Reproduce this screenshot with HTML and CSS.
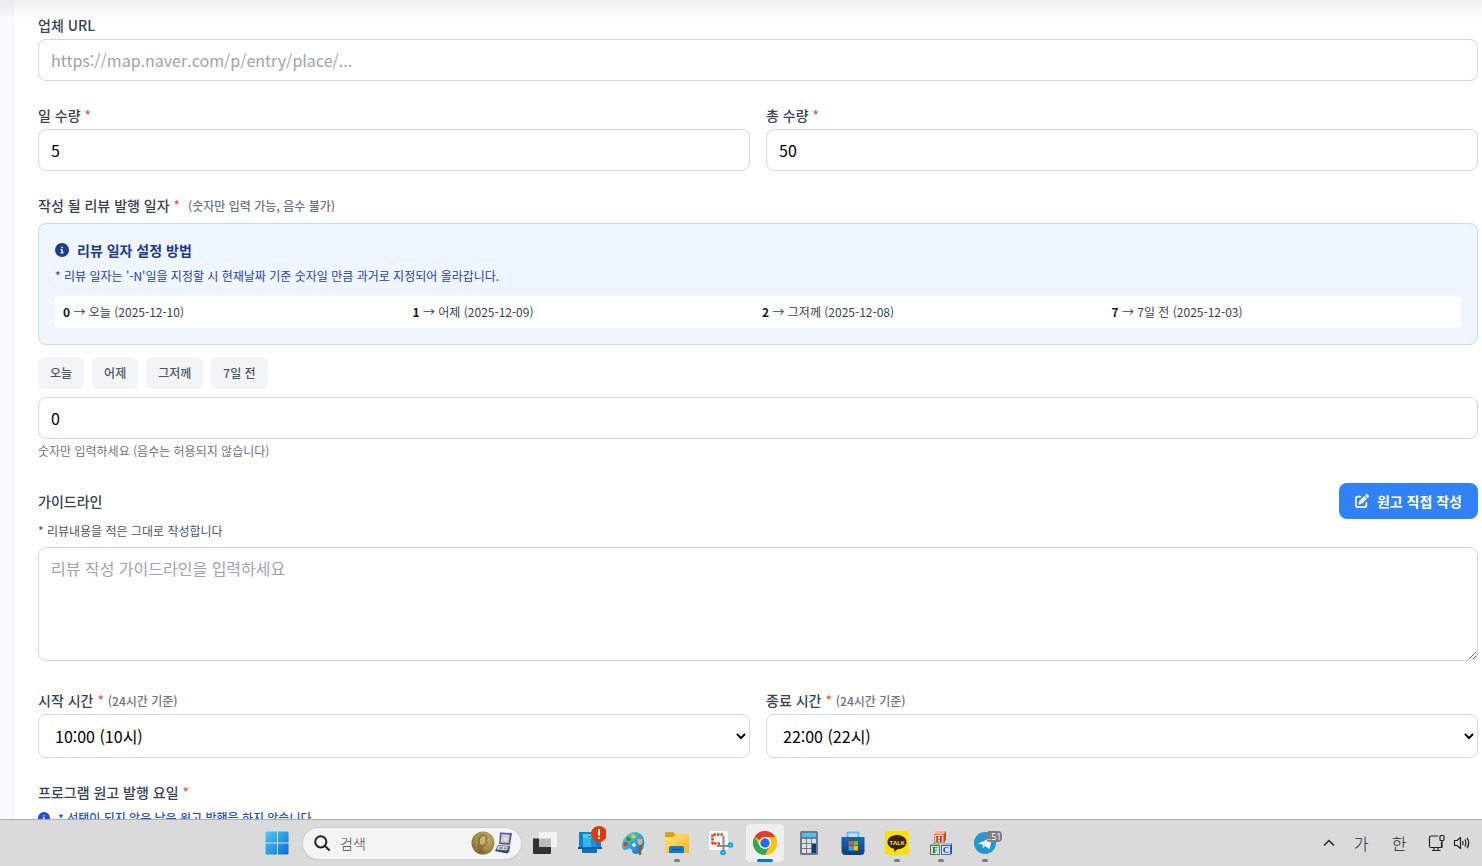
FILE: index.html
```html
<!DOCTYPE html>
<html lang="ko">
<head>
<meta charset="utf-8">
<meta name="viewport" content="width=device-width, initial-scale=1">
<title>리뷰 등록</title>
<link rel="stylesheet" href="styles.css">
</head>
<body>
<main class="page">
  <form class="panel">
    <div class="field">
      <label class="label" for="url">업체 URL</label>
      <input class="control" id="url" type="text" placeholder="https://map.naver.com/p/entry/place/...">
    </div>

    <div class="pair">
      <div class="field">
        <label class="label" for="daily">일 수량 <span class="req">*</span></label>
        <input class="control" id="daily" type="text" inputmode="numeric" value="5">
      </div>
      <div class="field">
        <label class="label" for="total">총 수량 <span class="req">*</span></label>
        <input class="control" id="total" type="text" inputmode="numeric" value="50">
      </div>
    </div>

    <div class="field">
      <label class="label label-wide" for="days">작성 될 리뷰 발행 일자 <span class="req">*</span> <span class="note note-gap">(숫자만 입력 가능, 음수 불가)</span></label>
      <section class="info">
        <h2 class="info-title">
          <svg class="info-icon" viewBox="0 0 512 512" aria-hidden="true"><circle cx="256" cy="256" r="256" fill="currentColor"/><path fill="#eff6ff" d="M216 336h24v-64h-24a24 24 0 0 1 0-48h48a24 24 0 0 1 24 24v88h8a24 24 0 0 1 0 48h-80a24 24 0 0 1 0-48zM256 128a32 32 0 1 1 0 64 32 32 0 0 1 0-64z"/></svg>
          리뷰 일자 설정 방법
        </h2>
        <p class="info-text">* 리뷰 일자는 '-N'일을 지정할 시 현재날짜 기준 숫자일 만큼 과거로 지정되어 올라갑니다.</p>
        <div class="examples">
          <div><b>0</b> → 오늘 (2025-12-10)</div>
          <div><b>1</b> → 어제 (2025-12-09)</div>
          <div><b>2</b> → 그저께 (2025-12-08)</div>
          <div><b>7</b> → 7일 전 (2025-12-03)</div>
        </div>
      </section>
      <div class="chips">
        <button class="chip" type="button">오늘</button>
        <button class="chip" type="button">어제</button>
        <button class="chip" type="button">그저께</button>
        <button class="chip" type="button">7일 전</button>
      </div>
      <input class="control" id="days" type="text" inputmode="numeric" value="0">
      <p class="hint">숫자만 입력하세요 (음수는 허용되지 않습니다)</p>
    </div>

    <div class="field">
      <div class="guide-head">
        <label class="guide-label" for="guide">가이드라인</label>
        <button class="primary" type="button">
          <svg class="primary-icon" viewBox="0 0 512 512" aria-hidden="true"><path fill="currentColor" d="M471.600 21.700c-21.900-21.900-57.300-21.900-79.200 0L362.300 51.700l97.900 97.900 30.100-30.100c21.900-21.900 21.900-57.300 0-79.200L471.600 21.700zM172.400 241.700c-6.100 6.100-10.800 13.600-13.500 21.900l-29.600 88.800c-2.900 8.600-.6 18.100 5.800 24.600s15.900 8.700 24.600 5.800l88.800-29.600c8.200-2.700 15.700-7.400 21.900-13.500L437.700 172.300 339.700 74.300 172.400 241.700zM96 64C43 64 0 107 0 160v256c0 53 43 96 96 96h256c53 0 96-43 96-96v-96c0-17.700-14.300-32-32-32s-32 14.300-32 32v96c0 17.700-14.300 32-32 32H96c-17.700 0-32-14.300-32-32V160c0-17.700 14.300-32 32-32h96c17.700 0 32-14.300 32-32s-14.300-32-32-32H96z"/></svg>
          원고 직접 작성
        </button>
      </div>
      <p class="guide-note">* 리뷰내용을 적은 그대로 작성합니다</p>
      <textarea class="control area" id="guide" rows="4" placeholder="리뷰 작성 가이드라인을 입력하세요"></textarea>
    </div>

    <div class="pair pair-times">
      <div class="field">
        <label class="label" for="start">시작 시간 <span class="req">*</span> <span class="note">(24시간 기준)</span></label>
        <select class="control select" id="start"><option>10:00 (10시)</option></select>
      </div>
      <div class="field">
        <label class="label" for="end">종료 시간 <span class="req">*</span> <span class="note">(24시간 기준)</span></label>
        <select class="control select" id="end"><option>22:00 (22시)</option></select>
      </div>
    </div>

    <div class="field">
      <p class="label label-wide">프로그램 원고 발행 요일 <span class="req">*</span></p>
      <p class="days-note">
        <svg class="days-icon" viewBox="0 0 512 512" aria-hidden="true"><circle cx="256" cy="256" r="256" fill="currentColor"/><path fill="#fff" d="M216 336h24v-64h-24a24 24 0 0 1 0-48h48a24 24 0 0 1 24 24v88h8a24 24 0 0 1 0 48h-80a24 24 0 0 1 0-48zM256 128a32 32 0 1 1 0 64 32 32 0 0 1 0-64z"/></svg>
        * 선택이 되지 않은 날은 원고 발행을 하지 않습니다.
      </p>
    </div>
  </form>
</main>

<footer class="taskbar">
  <button class="task" type="button" aria-label="시작">
    <svg width="24" height="24" viewBox="0 0 24 24"><defs><linearGradient id="win" x1="0" y1="0" x2="1" y2="1"><stop offset="0" stop-color="#4cc9fb"/><stop offset="1" stop-color="#0671cf"/></linearGradient></defs><path fill="url(#win)" d="M1.500.500H12V11.500H.500V1.500Q.500.500 1.500.500zM13 .500h9.500q1 0 1 1v10H13zM.500 12.500H12v11H1.500q-1 0-1-1zM13 12.500h10.500v10q0 1-1 1H13z"/></svg>
  </button>
  <label class="search">
    <svg width="16" height="16" viewBox="0 0 16 16" fill="none" stroke="#222" stroke-width="2" stroke-linecap="round" aria-hidden="true"><circle cx="6.800" cy="6.800" r="5.600"/><path d="M11 11l4 4"/></svg>
    <input class="search-input" type="text" placeholder="검색" aria-label="검색">
    <svg width="42" height="24" viewBox="0 0 42 24" aria-hidden="true"><defs><radialGradient id="coin" cx=".6" cy=".35" r=".75"><stop offset="0" stop-color="#c9b476"/><stop offset=".6" stop-color="#a48a45"/><stop offset="1" stop-color="#75602a"/></radialGradient></defs><circle cx="12" cy="12" r="11.500" fill="url(#coin)"/><path fill="#705b2a" opacity=".55" d="M7 22c0-5-1-6 0-9 0-2-1-3 0-5 1-4 5-6 8-4 2 1 2 4 1 6l1 2-2 1c0 3-3 3-3 5l2 4z"/><path fill="#c8b370" d="M9 8c1-3 4-4 6-2l-1 3 1 2-3 3-3-1z"/><path fill="#4c5aa0" d="M29 1.500 41 2l-2 12-11-1z"/><path fill="#d6cbc0" d="M30.500 3 39 3.500 37.500 12l-8-.5z"/><circle cx="34.500" cy="8" r="2" fill="#eee6dd"/><path fill="#33447f" d="M27 14l12 1-1 6-2 1.500L24 20z"/><path fill="#d5cfcf" d="M27.500 14.500l10 1-1.500 4-10.500-1z"/><path fill="#8a7e83" d="M29 16l3 .5-1 1.500-3-.5zM33.500 16.500l2.500.3-1 1.500-2.500-.3z"/></svg>
  </label>
  <button class="task task-after-search" type="button" aria-label="작업 보기">
    <svg width="24" height="24" viewBox="0 0 24 24"><path fill="#303030" d="M0 7.500h18V22q0 1-1 1H1q-1 0-1-1z"/><path fill="#f3f3f3" d="M6 2q0-1 1-1h16q1 0 1 1v14H6z"/><path fill="#bbb" d="M6 7.500h12V16H6z"/></svg>
  </button>
  <button class="task" type="button" aria-label="알림 앱">
    <svg width="34" height="34" viewBox="0 0 34 34"><path fill="#1380cc" d="M7 6h22v15H7z"/><path fill="#095ca8" d="M6 21h24v2H6z"/><path fill="#2fb4ee" d="M11 8h13v13H11z"/><path fill="#52cef9" d="M11 8h8v4h-8z"/><path fill="#1a91d8" d="M19 12h5v9h-5z"/><path fill="#0c71bd" d="M10 23h15v3q0 1-1 1H11q-1 0-1-1z"/><path stroke="#0879c5" d="M16 10.500h3"/><circle cx="27" cy="8" r="8" fill="#dc3b08"/><path stroke="#fff" stroke-width="2" d="M27 3v6.500M27 11v2"/></svg>
  </button>
  <button class="task" type="button" aria-label="그림판">
    <svg width="24" height="24" viewBox="0 0 24 24"><defs><linearGradient id="pal" x1="0" y1="0" x2="1" y2="1"><stop offset="0" stop-color="#56d8f5"/><stop offset="1" stop-color="#0871c4"/></linearGradient></defs><path fill="url(#pal)" d="M14 1C7 1 1 8 1 15c0 4 3 5 6 3 2-1 4 0 4 2 0 3 4 4 7 2 8-5 7-21-4-21z"/><circle cx="4.500" cy="13" r="2.200" fill="#dc3b14"/><circle cx="7.500" cy="8" r="2.300" fill="#28a51b"/><circle cx="12.500" cy="5.500" r="2.300" fill="#fbc209"/><path stroke="#fff" stroke-width="1.500" d="M13 12v4M11 14h4"/><path stroke="#995a27" stroke-width="2.600" stroke-linecap="round" d="M19 12v11"/><path fill="#deb675" d="M16.500 8h5v3L20 14h-2l-1.500-3z"/></svg>
  </button>
  <button class="task task-running" type="button" aria-label="파일 탐색기">
    <svg width="26" height="24" viewBox="0 0 26 24"><defs><linearGradient id="fold" x2="1" y2="1"><stop stop-color="#ffe08a"/><stop offset="1" stop-color="#fdb90b"/></linearGradient></defs><path fill="#dda016" d="M1 2.500Q1 1 2.500 1H9l3 3v4H1z"/><path fill="url(#fold)" d="M1 6h8l3-3h12q1 0 1 1v18H1z"/><path fill="#1579c8" d="M5 22v-5q0-2 2-2h11q2 0 2 2v5z"/><path stroke="#0758a0" d="M8 18.500h9"/></svg>
  </button>
  <button class="task" type="button" aria-label="캡처 도구">
    <svg width="26" height="26" viewBox="0 0 26 26"><rect x="1" y="1" width="19" height="19" rx="2" fill="#f5f7f8"/><path d="M15 4.500H4.500V15M12 13.500H4" fill="none" stroke="#d4441c" stroke-width="2.500" stroke-dasharray="2.500 1"/><path fill="none" stroke="#858c92" stroke-width="2" d="M15.500 6v14M9 16h12"/><g fill="#d8f0fb" stroke="#159ce0" stroke-width="2"><circle cx="22.500" cy="15" r="1.800"/><circle cx="15" cy="22.500" r="1.800"/></g></svg>
  </button>
  <button class="task task-active" type="button" aria-label="Chrome">
    <svg width="24" height="24" viewBox="0 0 24 24"><circle cx="12" cy="12" r="12" fill="#fbc116"/><path fill="#e33b2e" d="M12 12 1.600 6A12 12 0 0 1 22.400 6H12z"/><path fill="#2da94f" d="M1.600 6A12 12 0 0 0 12 24l5.200-9L12 12 6.800 15z"/><path fill="#fbc116" d="M12 24A12 12 0 0 0 22.400 6H12l5.200 9z"/><circle cx="12" cy="12" r="6" fill="#fff"/><circle cx="12" cy="12" r="4.700" fill="#286de8"/></svg>
  </button>
  <button class="task" type="button" aria-label="계산기">
    <svg width="18" height="24" viewBox="0 0 18 24"><rect width="18" height="24" rx="1.500" fill="#6e7b86"/><path fill="#43c6f5" d="M2 2h14v4H2z"/><path fill="#dce3e8" d="M2 8h4v4H2zM7 8h4v4H7zM12 8h4v4h-4zM2 13h4v4H2zM7 13h4v4H7zM2 18h4v4H2zM7 18h4v4H7z"/><path fill="#0c3d7d" d="M12 13h4v9h-4z"/></svg>
  </button>
  <button class="task" type="button" aria-label="스토어">
    <svg width="24" height="24" viewBox="0 0 24 24"><defs><linearGradient id="store" x2="0" y2="1"><stop stop-color="#126abb"/><stop offset="1" stop-color="#133e70"/></linearGradient></defs><path fill="none" stroke="#4ac8f5" stroke-width="2" d="M6.500 7V2.500q0-1 1-1h9q1 0 1 1V7"/><path fill="url(#store)" d="M.500 6h23v14q0 4-4 4h-15q-4 0-4-4z"/><path fill="#ee5125" d="M7.500 10H12v4.500H7.500z"/><path fill="#7dba18" d="M12.500 10H17v4.500h-4.500z"/><path fill="#23a5eb" d="M7.500 15H12v4.500H7.500z"/><path fill="#ffbd10" d="M12.500 15H17v4.500h-4.500z"/></svg>
  </button>
  <button class="task task-running" type="button" aria-label="카카오톡">
    <svg width="24" height="24" viewBox="0 0 24 24"><rect width="24" height="24" rx="2" fill="#fae100"/><path fill="#392020" d="M12 4c5.500 0 9.500 3 9.500 7.200 0 4-4 7-9 7L9 21l.300-3.200C5.500 17 2.500 14.500 2.500 11.200 2.500 7 6.500 4 12 4z"/><text class="talk-text" x="12" y="13.500" text-anchor="middle">TALK</text></svg>
  </button>
  <button class="task task-running" type="button" aria-label="HFC">
    <svg width="24" height="26" viewBox="0 0 24 26"><path fill="#f4b18b" d="M5 4l2-3h10l-2 3z"/><path fill="#b65124" d="M15 4l2-3v9l-2 3z"/><path fill="#e5864d" d="M5 4h10v9H5z"/><path fill="#f9dccb" d="M6 5h8v7H6z"/><path fill="#87c4a3" d="M1 15l2-2h9l-1 2z"/><path fill="#9bb9ea" d="M12 15l2-2h9l-1 2z"/><path fill="#39845d" d="M1 15h10v10H1z"/><path fill="#4069b2" d="M12 15h10v10H12z"/><path fill="#234e94" d="M22 15l1-2v10l-1 2z"/><path fill="#cde7d7" d="M2 16h8v8H2z"/><path fill="#dce7fb" d="M13 16h8v8h-8z"/><g class="block-text" text-anchor="middle"><text x="10" y="12" fill="#a71c19">H</text><text x="6" y="23" fill="#116138">F</text><text x="17" y="23" fill="#173f94">C</text></g></svg>
  </button>
  <button class="task task-running" type="button" aria-label="텔레그램">
    <svg width="36" height="28" viewBox="0 0 36 28"><circle cx="18" cy="14" r="11" fill="#2298d2"/><path fill="#fff" d="M11 14.500 24 9q1-.3.800.800L22.800 19q-.3 1-1.300.500L18 17l-2 2-.500-3.500z"/><path fill="#b9d9ed" d="M15.500 15.500 22 11l-5 5.500-1 2.500z"/><rect x="19" y="2" width="16" height="11" rx="4" fill="#7d7f82"/><text class="badge-text" x="27" y="11" text-anchor="middle">..51</text></svg>
  </button>

  <div class="tray">
    <button class="tray-item tray-more" type="button" aria-label="숨겨진 아이콘"><svg width="12" height="8" viewBox="0 0 12 8" fill="none" stroke="#222" stroke-width="1.500"><path d="M1 6.500 6 1.500l5 5"/></svg></button>
    <button class="tray-item tray-mode" type="button">가</button>
    <button class="tray-item tray-mode" type="button">한</button>
    <button class="tray-item tray-status" type="button" aria-label="네트워크 및 볼륨">
      <svg width="18" height="18" viewBox="0 0 18 18" fill="none" stroke="#222" stroke-width="1.200"><path d="M10 2H3Q1.500 2 1.500 3.500v8.500q0 1.500 1.500 1.500h10.500V8M6 13.500v3M10 13.500v3M4 16.500h8.500"/><rect x="12" y="1.500" width="4" height="5" rx="1"/><path d="M14 6.500v7"/></svg>
      <svg width="18" height="16" viewBox="0 0 18 16" fill="none" stroke="#222" stroke-width="1.200" stroke-linejoin="round"><path d="M1.500 5.500H4L7.500 2.500v11L4 10.500H1.500zM9.500 6q1.200 2 0 4M11.800 4.500q2.200 3.500 0 7M14 2.800q3.500 5.200 0 10.400"/></svg>
    </button>
  </div>
</footer>
</body>
</html>
```
FILE: styles.css
```css
* {
  box-sizing: border-box;
}

body {
  margin: 0;
  height: 100vh;
  display: flex;
  flex-direction: column;
  overflow: hidden;
  background: #f9fafb;
  font-family: "Noto Sans CJK KR", "Noto Sans", sans-serif;
  font-size: 16px;
  line-height: 24px;
  color: #000;
}

p,
h2 {
  margin: 0;
}

button,
input,
select,
textarea {
  font: inherit;
  color: inherit;
}

button {
  border: 0;
  padding: 0;
  background: none;
}

/* Form */

.page {
  position: relative;
  flex: 1;
  min-height: 0;
  overflow: hidden;
  padding-left: 14px;
}

.page::before {
  content: "";
  position: absolute;
  inset: 0 0 auto;
  height: 20px;
  background: linear-gradient(rgba(0, 0, 0, 0.06), rgba(0, 0, 0, 0));
}

.panel {
  display: flex;
  flex-direction: column;
  gap: 24px;
  min-height: 100%;
  padding: 15px 4px 0 24px;
  background: #fff;
  box-shadow: 0 0 2px rgba(0, 0, 0, 0.06);
}

.field {
  display: flex;
  flex-direction: column;
  min-width: 0;
}

.pair {
  display: grid;
  grid-template-columns: 1fr 1fr;
  gap: 16px;
}

.pair-times {
  padding-top: 5px;
}

.label {
  margin-bottom: 4px;
  font-size: 14px;
  line-height: 20px;
  font-weight: 500;
  color: #374151;
}

.label-wide {
  margin-bottom: 8px;
}

.req {
  font-weight: 400;
  color: #ef4444;
}

.note {
  font-size: 12px;
  line-height: 16px;
  color: #6b7280;
}

.note-gap {
  margin-left: 4px;
}

.control {
  width: 100%;
  padding: 8px 12px;
  border: 1px solid #d1d5db;
  border-radius: 8px;
  background: #fff;
  height: 42px;
}

.control::placeholder {
  color: #9ca3af;
}

.area {
  height: auto;
  resize: vertical;
}

.select {
  height: 44px;
}

.info {
  padding: 16px;
  border: 1px solid #bfdbfe;
  border-radius: 8px;
  background: #eff6ff;
}

.info-title {
  display: flex;
  align-items: center;
  gap: 8px;
  margin-bottom: 8px;
  font-size: 14px;
  line-height: 20px;
  font-weight: 700;
  color: #1e3a8a;
}

.info-icon {
  width: 14px;
  height: 14px;
}

.info-text {
  margin-bottom: 12px;
  font-size: 12px;
  line-height: 16px;
  color: #1e40af;
}

.examples {
  display: grid;
  grid-template-columns: repeat(4, 1fr);
  gap: 8px;
  padding: 8px;
  border-radius: 4px;
  background: #fff;
  font-size: 12px;
  line-height: 16px;
  color: #374151;
}

.examples b {
  color: #111827;
}

.chips {
  display: flex;
  gap: 8px;
  margin: 12px 0 8px;
}

.chip {
  padding: 8px 12px;
  border-radius: 6px;
  background: #f3f4f6;
  font-size: 12px;
  line-height: 16px;
  font-weight: 500;
  color: #4b5563;
}

.hint {
  margin-top: 4px;
  font-size: 12px;
  line-height: 16px;
  color: #6b7280;
}

.guide-head {
  display: flex;
  align-items: center;
  justify-content: space-between;
  margin-bottom: 4px;
}

.guide-label {
  font-size: 14px;
  line-height: 20px;
  font-weight: 500;
  color: #374151;
}

.primary {
  display: flex;
  align-items: center;
  gap: 8px;
  padding: 8px 16px;
  border-radius: 8px;
  background: #3182f6;
  font-size: 14px;
  line-height: 20px;
  font-weight: 700;
  color: #fff;
}

.primary-icon {
  width: 14px;
  height: 14px;
}

.guide-note {
  margin-bottom: 8px;
  font-size: 12px;
  line-height: 16px;
  color: #4b5563;
}

.days-note {
  display: flex;
  align-items: center;
  gap: 8px;
  font-size: 12px;
  line-height: 16px;
  font-weight: 500;
  color: #1d4ed8;
}

.days-icon {
  width: 12px;
  height: 12px;
}

/* Taskbar */

.taskbar {
  display: flex;
  align-items: center;
  height: 47px;
  padding-left: 255px;
  border-top: 1px solid #acacac;
  background: #dadada;
}

.task {
  position: relative;
  display: flex;
  align-items: center;
  justify-content: center;
  flex: 0 0 44px;
  height: 40px;
}

.task svg {
  display: block;
}

.task-active::before {
  content: "";
  position: absolute;
  inset: 1px 3px;
  border-radius: 4px;
  background: #efefef;
}

.task-active svg {
  position: relative;
}

.task-running::after,
.task-active::after {
  content: "";
  position: absolute;
  bottom: 1px;
  left: 50%;
  width: 6px;
  height: 3px;
  margin-left: -3px;
  border-radius: 2px;
  background: #7c7c7c;
}

.task-active::after {
  width: 16px;
  margin-left: -8px;
  background: #0078d4;
}

.task-after-search {
  margin-left: 2px;
}

.search {
  display: flex;
  align-items: center;
  flex: 0 0 218px;
  min-width: 0;
  height: 31px;
  margin-left: 4px;
  padding: 0 8px 0 11px;
  border-radius: 16px;
  background: #f4f4f4;
  box-shadow: 0 0 0 1px #cfcfcf, 0 1px 1px #aaa;
}

.search-input {
  flex: 1;
  min-width: 0;
  margin-left: 10px;
  padding: 0;
  border: 0;
  background: none;
  font-size: 14px;
  font-weight: 300;
}

.search-input::placeholder {
  color: #444;
}

.talk-text {
  font: 700 6px "Open Sans", sans-serif;
  fill: #fae100;
}

.block-text {
  font: 700 9px "Liberation Serif", serif;
}

.badge-text {
  font: 400 9px "Open Sans", sans-serif;
  fill: #fff;
}

.tray {
  display: flex;
  align-items: center;
  height: 100%;
  margin-left: auto;
  padding-right: 11px;
}

.tray-item {
  display: flex;
  align-items: center;
  justify-content: center;
}

.tray-more {
  width: 26px;
}

.tray-mode {
  width: 38px;
  font-weight: 300;
  color: #222;
}

.tray-status {
  gap: 7px;
  margin-left: 10px;
}
```
